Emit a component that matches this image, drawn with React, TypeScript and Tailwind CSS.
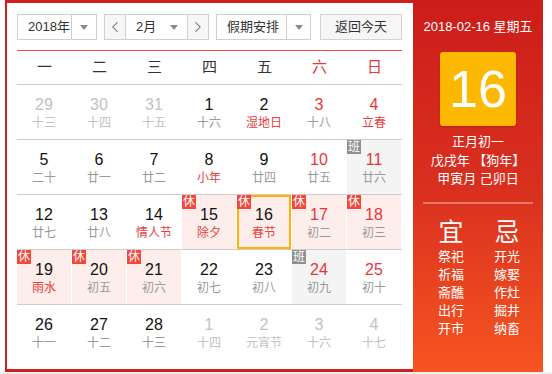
import React from "react";
import { ChevronLeft, ChevronRight } from "lucide-react";

type Day = {
  n: number;
  l: string;
  other?: boolean;
  redNum?: boolean;
  redL?: boolean;
  rest?: boolean;
  work?: boolean;
  sel?: boolean;
};

const rows: Day[][] = [
  [
    { n: 29, l: "十三", other: true },
    { n: 30, l: "十四", other: true },
    { n: 31, l: "十五", other: true },
    { n: 1, l: "十六" },
    { n: 2, l: "湿地日", redL: true },
    { n: 3, l: "十八", redNum: true },
    { n: 4, l: "立春", redNum: true, redL: true },
  ],
  [
    { n: 5, l: "二十" },
    { n: 6, l: "廿一" },
    { n: 7, l: "廿二" },
    { n: 8, l: "小年", redL: true },
    { n: 9, l: "廿四" },
    { n: 10, l: "廿五", redNum: true },
    { n: 11, l: "廿六", redNum: true, work: true },
  ],
  [
    { n: 12, l: "廿七" },
    { n: 13, l: "廿八" },
    { n: 14, l: "情人节", redL: true },
    { n: 15, l: "除夕", redL: true, rest: true },
    { n: 16, l: "春节", redL: true, rest: true, sel: true },
    { n: 17, l: "初二", redNum: true, rest: true },
    { n: 18, l: "初三", redNum: true, rest: true },
  ],
  [
    { n: 19, l: "雨水", redL: true, rest: true },
    { n: 20, l: "初五", rest: true },
    { n: 21, l: "初六", rest: true },
    { n: 22, l: "初七" },
    { n: 23, l: "初八" },
    { n: 24, l: "初九", redNum: true, work: true },
    { n: 25, l: "初十", redNum: true },
  ],
  [
    { n: 26, l: "十一" },
    { n: 27, l: "十二" },
    { n: 28, l: "十三" },
    { n: 1, l: "十四", other: true },
    { n: 2, l: "元宵节", other: true },
    { n: 3, l: "十六", other: true },
    { n: 4, l: "十七", other: true },
  ],
];

const weekdays = ["一", "二", "三", "四", "五", "六", "日"];

function Tri() {
  return (
    <div className="w-0 h-0 border-l-[4px] border-r-[4px] border-t-[5px] border-l-transparent border-r-transparent border-t-[#8a8a8a]" />
  );
}

function Cell({ d }: { d: Day }) {
  const bg = d.rest ? "bg-[#fdeeec]" : d.work ? "bg-[#f4f4f4]" : "bg-white";
  const numColor = d.other
    ? "text-[#c2c2c2]"
    : d.redNum
    ? "text-[#e8353a]"
    : "text-[#111]";
  const lColor = d.other
    ? "text-[#c2c2c2]"
    : d.redL
    ? "text-[#e8403f]"
    : "text-[#9a9a9a]";
  return (
    <div className="w-[55px] h-[54px] pr-[1px]">
      <div className={`relative w-[54px] h-[54px] flex flex-col items-center pt-[10px] ${bg}`}>
        {d.sel && (
          <div className="absolute inset-0 border-2 border-[#ffb300]" />
        )}
        <div className={`relative text-[16px] leading-[20px] ${numColor}`}>{d.n}</div>
        <div className={`relative text-[12px] leading-[16px] ${lColor}`}>{d.l}</div>
        {d.rest && (
          <div className="absolute top-0 left-0 w-[14px] h-[14px] bg-[#f4473a] text-white text-[12px] leading-[14px] text-center">
            休
          </div>
        )}
        {d.work && (
          <div className="absolute top-0 left-0 w-[14px] h-[14px] bg-[#8f8f8f] text-white text-[12px] leading-[14px] text-center">
            班
          </div>
        )}
      </div>
    </div>
  );
}

export default function App() {
  return (
    <div className="w-[552px] h-[374px] bg-white font-['Liberation_Sans','Noto_Sans_CJK_SC',sans-serif]">
      <div className="ml-[5px] flex w-[538px] h-[372px]">
        {/* calendar */}
        <div className="w-[408px] h-[372px] border-l-2 border-t-[3px] border-b-[3px] border-[#d0201c] pl-[10px] pr-[11px] pt-[11px]">
          {/* toolbar */}
          <div className="flex h-[26px] text-[13px] text-[#333]">
            <div className="flex w-[80px] h-[26px] border border-[#cfcfcf] bg-white">
              <div className="flex-1 flex items-center pl-[10px]">2018年</div>
              <div className="w-[25px] flex items-center justify-center border-l border-[#cfcfcf]">
                <Tri />
              </div>
            </div>
            <div className="ml-[7px] flex w-[105px] h-[26px] border border-[#cfcfcf] bg-white">
              <div className="w-[21px] flex items-center justify-center bg-[#f6f6f6] border-r border-[#cfcfcf] text-[#666]">
                <ChevronLeft size={18} strokeWidth={1.4} />
              </div>
              <div className="flex-1 flex items-center pl-[10px] pr-[9px] justify-between">
                <span>2月</span>
                <Tri />
              </div>
              <div className="w-[21px] flex items-center justify-center bg-[#f6f6f6] border-l border-[#cfcfcf] text-[#666]">
                <ChevronRight size={18} strokeWidth={1.4} />
              </div>
            </div>
            <div className="ml-[7px] flex w-[95px] h-[26px] border border-[#cfcfcf] bg-white">
              <div className="flex-1 flex items-center pl-[10px]">假期安排</div>
              <div className="w-[24px] flex items-center justify-center border-l border-[#cfcfcf]">
                <Tri />
              </div>
            </div>
            <div className="ml-auto w-[82px] h-[26px] border border-[#d3d3d3] bg-[#f6f6f6] flex items-center justify-center">
              返回今天
            </div>
          </div>
          <div className="mt-[10px] h-[1px] bg-[#ee4d45]" />
          {/* weekday header */}
          <div className="flex h-[34px] border-b border-[#cccccc]">
            {weekdays.map((w, i) => (
              <div
                key={w}
                className={`w-[55px] flex items-center justify-center text-[15px] ${
                  i >= 5 ? "text-[#e8353a]" : "text-[#333]"
                }`}
              >
                {w}
              </div>
            ))}
          </div>
          {rows.map((r, ri) => (
            <div
              key={ri}
              className={`flex h-[55px] ${ri < rows.length - 1 ? "border-b border-[#cccccc]" : ""}`}
            >
              {r.map((d, di) => (
                <Cell key={di} d={d} />
              ))}
            </div>
          ))}
        </div>
        {/* right panel */}
        <div className="w-[130px] h-[372px] bg-linear-to-b from-[#cc1d1a] via-[#d92f1f] to-[#f65421] text-white flex flex-col items-center">
          <div className="mt-[18px] text-[13px] leading-[18px]">2018-02-16 星期五</div>
          <div className="mt-[16px] w-[76px] h-[74px] rounded-[3px] bg-[#fdb900] shadow-[0_1px_2px_rgba(120,0,0,0.25)] flex items-center justify-center text-[52px] leading-none font-light">
            16
          </div>
          <div className="mt-[7px] text-[13px] leading-[18.5px] text-center">
            <div>正月初一</div>
            <div>戊戌年 【狗年】</div>
            <div>甲寅月 己卯日</div>
          </div>
          <div className="mt-[13px] w-[110px] h-[2px] bg-[#e8776c]" />
          <div className="w-full flex pl-[10px] mt-[13px]">
            <div className="w-[56px] flex flex-col items-center">
              <div className="text-[25px] leading-[30px]">宜</div>
              <div className="mt-[1px] text-[13px] leading-[18px] text-center">
                <div>祭祀</div>
                <div>祈福</div>
                <div>斋醮</div>
                <div>出行</div>
                <div>开市</div>
              </div>
            </div>
            <div className="w-[56px] flex flex-col items-center">
              <div className="text-[25px] leading-[30px]">忌</div>
              <div className="mt-[1px] text-[13px] leading-[18px] text-center">
                <div>开光</div>
                <div>嫁娶</div>
                <div>作灶</div>
                <div>掘井</div>
                <div>纳畜</div>
              </div>
            </div>
          </div>
        </div>
      </div>
      <div className="h-[2px] bg-[#f0f0f0]" />
    </div>
  );
}
